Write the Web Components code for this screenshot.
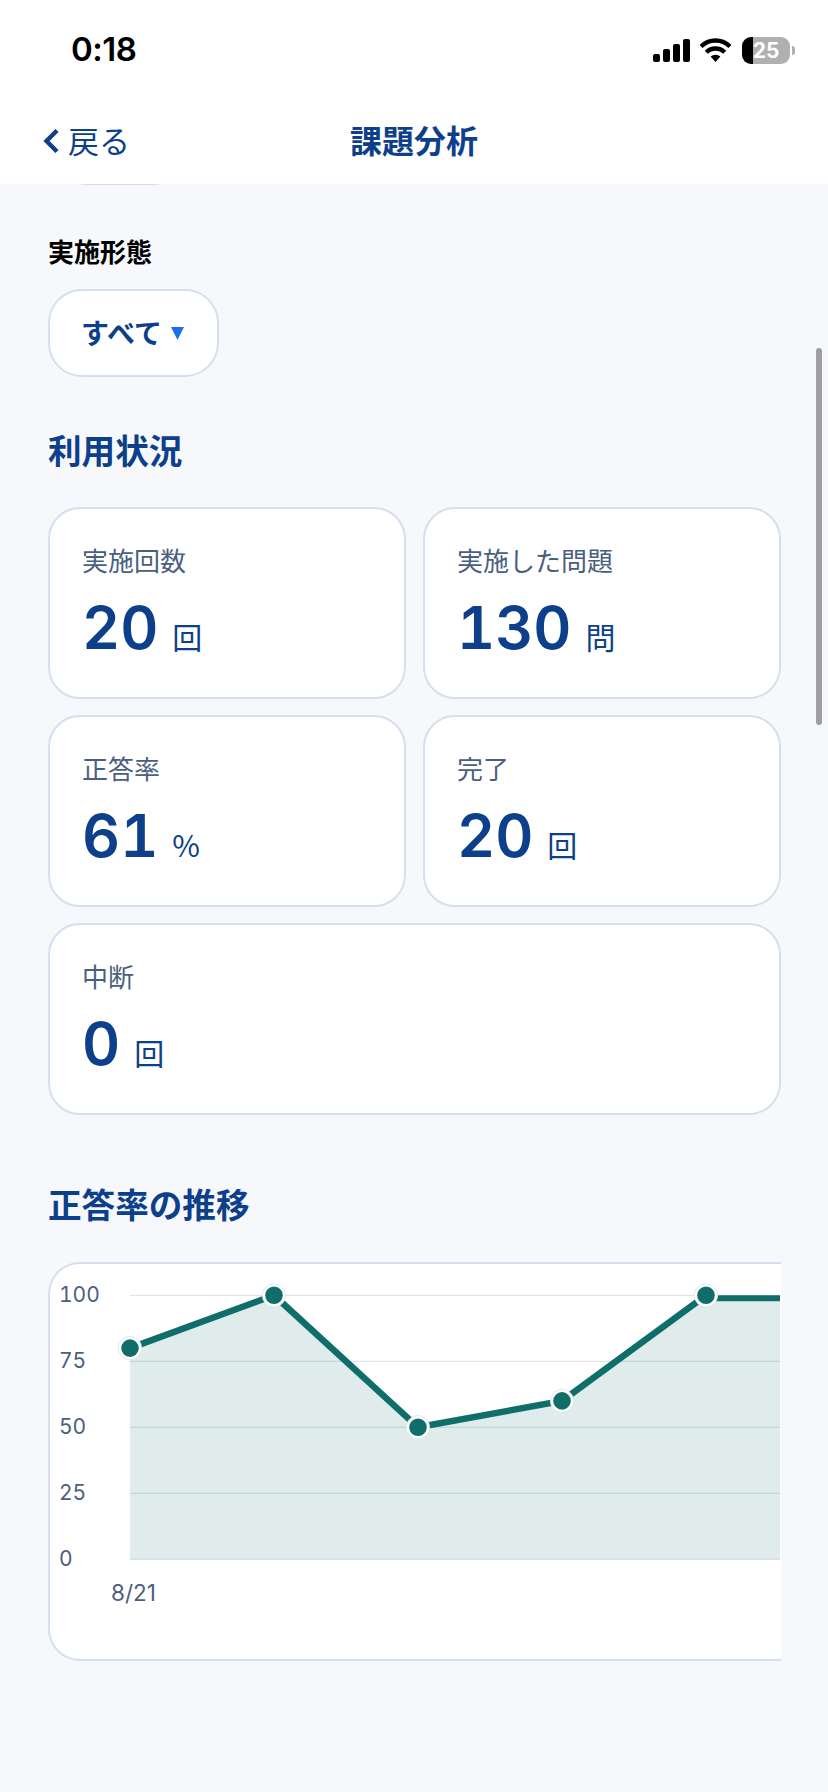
<!DOCTYPE html>
<html lang="ja">
<head>
<meta charset="utf-8">
<title>課題分析</title>
<style>
    html, body { margin: 0; padding: 0; background: #f6f8fc; }
    body { font-family: "Noto Sans CJK JP", sans-serif; }
    main { display: block; padding: 49px 47px 0 48px; }
</style>
</head>
<body>
<status-bar time="0:18" battery="25"></status-bar>
<nav-header back="戻る">課題分析</nav-header>
<main>
    <filter-select label="実施形態">すべて</filter-select>
    <section-title top="51" bottom="35">利用状況</section-title>
    <stat-grid>
        <stat-card label="実施回数" unit="回">20</stat-card>
        <stat-card label="実施した問題" unit="問">130</stat-card>
        <stat-card label="正答率" unit="%">61</stat-card>
        <stat-card label="完了" unit="回">20</stat-card>
        <stat-card label="中断" unit="回" wide>0</stat-card>
    </stat-grid>
    <section-title top="67" bottom="36">正答率の推移</section-title>
    <trend-chart></trend-chart>
</main>
<scroll-thumb></scroll-thumb>

<script>
class StatusBar extends HTMLElement {
    constructor() {
        super();
        this.shadowDOM = this.attachShadow({mode: "open"});
    }

    connectedCallback() {
        this.shadowDOM.innerHTML = `
            <style>
                :host {
                    display: flex;
                    align-items: center;
                    justify-content: space-between;
                    height: 100px;
                    padding: 0 33px 0 71px;
                    box-sizing: border-box;
                    background: #fff;
                }
                .time {
                    font: 600 33px/40px Inter, sans-serif;
                    color: #000;
                    letter-spacing: -0.5px;
                    margin-top: -2px;
                }
                .icons {
                    display: flex;
                    align-items: center;
                    gap: 10px;
                }
                svg { display: block; }
                .battery {
                    display: flex;
                    align-items: center;
                    justify-content: center;
                    width: 48px;
                    height: 27px;
                    margin-left: 1px;
                    border-radius: 9px;
                    background: linear-gradient(90deg, #000 11px, #b0b0b0 11px);
                    font: 700 21px/27px Inter, sans-serif;
                    color: #fff;
                }
                .nub {
                    width: 3px;
                    height: 9px;
                    margin-left: -8px;
                    border-radius: 0 3px 3px 0;
                    background: #b0b0b0;
                }
            </style>
            <span class="time">${this.getAttribute("time")}</span>
            <div class="icons">
                <svg width="37" height="23" viewBox="0 0 37 23" fill="#000">
                    <rect x="0" y="15" width="7" height="8" rx="2"/>
                    <rect x="10" y="10" width="7" height="13" rx="2"/>
                    <rect x="20" y="5" width="7" height="18" rx="2"/>
                    <rect x="30" y="0" width="7" height="23" rx="2"/>
                </svg>
                <svg width="31" height="24" viewBox="0 0 31 24">
                    <path d="M15.5 24 L10.6 18.6 A7.2 7.2 0 0 1 20.4 18.6 Z" fill="#000"/>
                    <path d="M6.3 14.3 A13 13 0 0 1 24.7 14.3" fill="none" stroke="#000" stroke-width="4.4"/>
                    <path d="M1 8.5 A20.5 20.5 0 0 1 30 8.5" fill="none" stroke="#000" stroke-width="4.4"/>
                </svg>
                <span class="battery">${this.getAttribute("battery")}</span>
                <span class="nub"></span>
            </div>`;
    }
}

class NavHeader extends HTMLElement {
    constructor() {
        super();
        this.shadowDOM = this.attachShadow({mode: "open"});
    }

    connectedCallback() {
        this.shadowDOM.innerHTML = `
            <style>
                :host {
                    display: grid;
                    grid-template-columns: 1fr auto 1fr;
                    align-items: center;
                    position: relative;
                    height: 84px;
                    padding: 0 43px 5px;
                    box-sizing: border-box;
                    background: #fff;
                    color: #0d3f8a;
                }
                .back {
                    display: flex;
                    align-items: center;
                    gap: 9px;
                    font-size: 31px;
                    line-height: 40px;
                }
                .back svg { display: block; margin-top: 3px; }
                .title {
                    font-size: 32px;
                    line-height: 40px;
                    font-weight: 700;
                    margin-top: -2px;
                }
                .edge {
                    position: absolute;
                    left: 76px;
                    bottom: -1px;
                    width: 88px;
                    height: 1px;
                    background: linear-gradient(90deg, #f6f8fc, #d5dfee 12%, #d5dfee 88%, #f6f8fc);
                }
            </style>
            <div class="back">
                <svg width="16" height="24" viewBox="0 0 16 24" fill="none" stroke="#0d3f8a" stroke-width="4.4">
                    <path d="M14 1.5 L3.5 12 L14 22.5"/>
                </svg>
                <span>${this.getAttribute("back")}</span>
            </div>
            <div class="title"><slot></slot></div>
            <span class="edge"></span>`;
    }
}

class FilterSelect extends HTMLElement {
    constructor() {
        super();
        this.shadowDOM = this.attachShadow({mode: "open"});
    }

    connectedCallback() {
        this.shadowDOM.innerHTML = `
            <style>
                :host { display: block; }
                .label {
                    font-size: 26px;
                    line-height: 36px;
                    font-weight: 700;
                    color: #000;
                    margin-bottom: 20px;
                }
                .box {
                    display: inline-flex;
                    align-items: center;
                    gap: 9px;
                    height: 88px;
                    padding: 0 33px 2px 31px;
                    box-sizing: border-box;
                    background: #fff;
                    border: 2px solid #d5dfee;
                    border-radius: 34px;
                    font-size: 28px;
                    font-weight: 700;
                    color: #0d3f8a;
                }
                .arrow { display: block; margin-top: 2px; }
            </style>
            <div class="label">${this.getAttribute("label")}</div>
            <div class="box">
                <slot></slot>
                <svg class="arrow" width="13" height="13" viewBox="0 0 13 13"><path d="M0 0 H13 L6.5 13 Z" fill="#1f6fec"/></svg>
            </div>`;
    }
}

class SectionTitle extends HTMLElement {
    constructor() {
        super();
        this.shadowDOM = this.attachShadow({mode: "open"});
    }

    connectedCallback() {
        this.shadowDOM.innerHTML = `
            <style>
                :host {
                    display: block;
                    margin: ${this.getAttribute("top")}px 0 ${this.getAttribute("bottom")}px;
                    font-size: 33.6px;
                    line-height: 44px;
                    font-weight: 700;
                    color: #0d3f8a;
                }
            </style>
            <slot></slot>`;
    }
}

class StatGrid extends HTMLElement {
    constructor() {
        super();
        this.shadowDOM = this.attachShadow({mode: "open"});
    }

    connectedCallback() {
        this.shadowDOM.innerHTML = `
            <style>
                :host {
                    display: grid;
                    grid-template-columns: 1fr 1fr;
                    gap: 16px 17px;
                }
            </style>
            <slot></slot>`;
    }
}

class StatCard extends HTMLElement {
    constructor() {
        super();
        this.shadowDOM = this.attachShadow({mode: "open"});
    }

    connectedCallback() {
        this.shadowDOM.innerHTML = `
            <style>
                :host {
                    display: block;
                    height: 192px;
                    padding: 33px 32px 0;
                    box-sizing: border-box;
                    background: #fff;
                    border: 2px solid #d5dfee;
                    border-radius: 32px;
                    ${this.hasAttribute("wide") ? "grid-column: 1 / -1;" : ""}
                }
                .label {
                    font-size: 26px;
                    line-height: 36px;
                    color: #4a5f80;
                }
                .value {
                    display: flex;
                    align-items: baseline;
                    gap: 14px;
                    margin-top: 14px;
                    color: #0d3f8a;
                }
                .num {
                    font: 600 59px/72px Inter, sans-serif;
                    font-variant-numeric: tabular-nums;
                }
                .unit {
                    font: 400 30px/40px "Noto Sans CJK JP", sans-serif;
                }
            </style>
            <div class="label">${this.getAttribute("label")}</div>
            <div class="value">
                <span class="num"><slot></slot></span>
                <span class="unit">${this.getAttribute("unit")}</span>
            </div>`;
    }
}

class TrendChart extends HTMLElement {
    constructor() {
        super();
        this.shadowDOM = this.attachShadow({mode: "open"});
    }

    connectedCallback() {
        // x starts 80px into the card, each point 144px on; y 100 -> 31.3, y 0 -> 295.3
        const toY = v => 31.3 + (100 - v) * 2.64;
        const values = [80, 100, 50, 60, 100];
        const pts = values.map((v, i) => [80 + i * 144, toY(v)]);
        const line = pts.map(p => p.join(",")).join(" ");
        const grid = [100, 75, 50, 25, 0].map(v => `
            <line x1="80" x2="732" y1="${toY(v)}" y2="${toY(v)}" stroke="#d5dfe8" stroke-width="1"/>
            <text x="9" y="${toY(v) + 7}">${v}</text>`).join("");
        const dots = pts.map(p => `
            <circle cx="${p[0]}" cy="${p[1]}" r="11.7" fill="#fff" stroke="#cfe3e1" stroke-width="0.7"/>
            <circle cx="${p[0]}" cy="${p[1]}" r="8.8" fill="#0f6e6a"/>`).join("");

        this.shadowDOM.innerHTML = `
            <style>
                :host {
                    display: block;
                    height: 399px;
                    box-sizing: border-box;
                    background: #fff;
                    border: 2px solid #d5dfee;
                    border-right: 0;
                    border-radius: 32px 0 0 32px;
                    overflow: hidden;
                }
                svg { display: block; }
                text {
                    font: 400 21px Inter, sans-serif;
                    font-variant-numeric: tabular-nums;
                    fill: #4a5f80;
                }
                .date { font-size: 22.5px; font-variant-numeric: normal; }
            </style>
            <svg width="730" height="395" viewBox="0 0 730 395">
                ${grid}
                <polygon points="${line} 656,34.3 732,34.3 732,295.3 80,295.3" fill="#0f6e6a" fill-opacity="0.13"/>
                <polyline points="${line}" fill="none" stroke="#0f6e6a" stroke-width="6.5"/>
                <line x1="656" x2="732" y1="34.3" y2="34.3" stroke="#0f6e6a" stroke-width="6"/>
                ${dots}
                <text class="date" x="61" y="337">8/21</text>
            </svg>`;
    }
}

class ScrollThumb extends HTMLElement {
    constructor() {
        super();
        this.shadowDOM = this.attachShadow({mode: "open"});
    }

    connectedCallback() {
        this.shadowDOM.innerHTML = `
            <style>
                :host {
                    position: absolute;
                    left: 816px;
                    top: 348px;
                    width: 6px;
                    height: 377px;
                    border-radius: 3px;
                    background: #9f9f9f;
                }
            </style>`;
    }
}

customElements.define("status-bar", StatusBar);
customElements.define("nav-header", NavHeader);
customElements.define("filter-select", FilterSelect);
customElements.define("section-title", SectionTitle);
customElements.define("stat-grid", StatGrid);
customElements.define("stat-card", StatCard);
customElements.define("trend-chart", TrendChart);
customElements.define("scroll-thumb", ScrollThumb);
</script>
</body>
</html>
